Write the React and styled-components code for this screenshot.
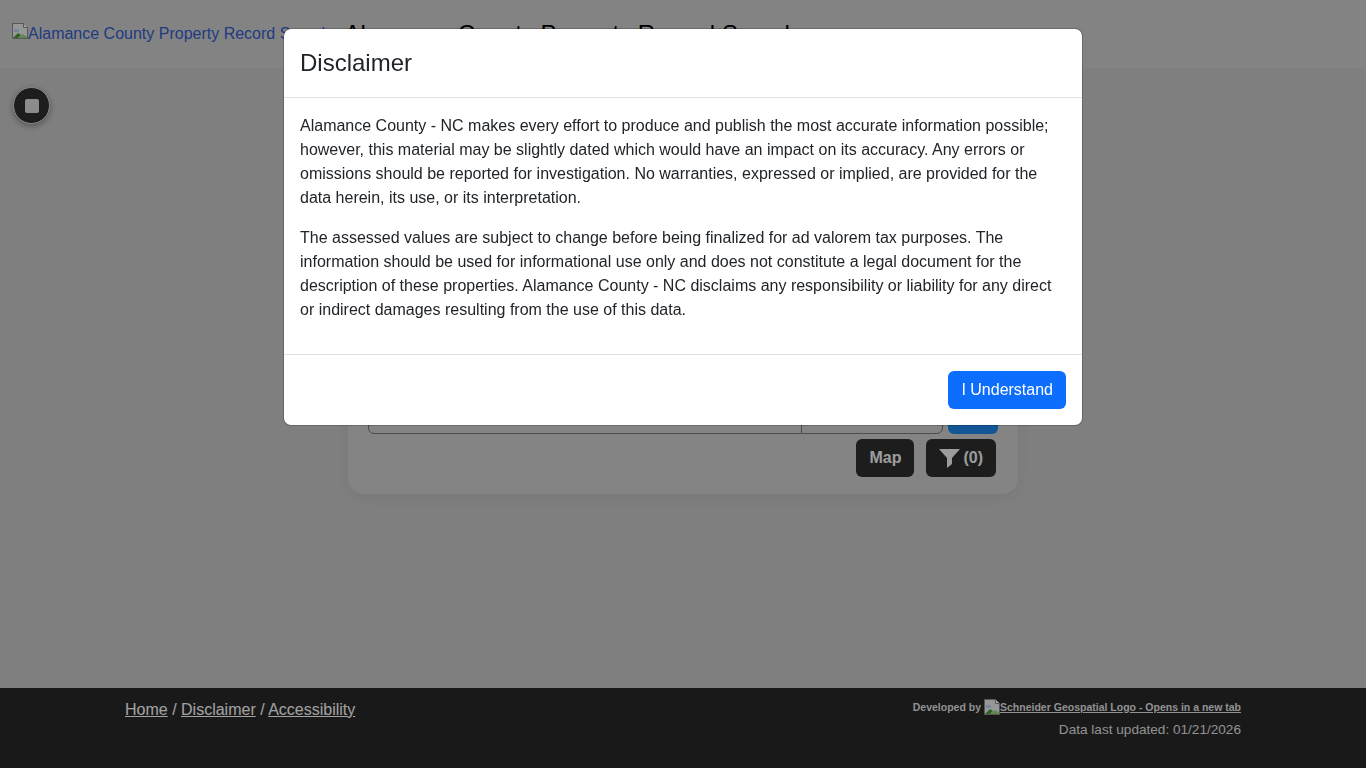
import React from 'react';
import styled, { createGlobalStyle } from 'styled-components';

const GlobalStyle = createGlobalStyle`
  html, body {
    margin: 0;
    padding: 0;
    height: 100%;
    background: #b7b7b7;
    font-family: "Liberation Sans", Arial, sans-serif;
    font-size: 16px;
    line-height: 24px;
    color: #212529;
    overflow: hidden;
  }
  * {
    box-sizing: border-box;
  }
`;

const Page = styled.div`
  position: relative;
  display: flex;
  flex-direction: column;
  height: 768px;
`;

const Header = styled.header`
  display: flex;
  align-items: center;
  height: 68px;
  padding: 0 12px 1px;
  background: #bcbcbc;
`;

const LogoLink = styled.a`
  display: flex;
  align-items: baseline;
  color: #2f55b8;
  text-decoration: none;
  white-space: nowrap;
`;

const Title = styled.h1`
  margin: 0 0 0 14px;
  font-size: 24px;
  font-weight: 400;
  color: #000;
  white-space: nowrap;
`;

const Main = styled.main`
  flex: 1;
  display: flex;
  justify-content: center;
  align-items: flex-start;
  padding-top: 130px;
`;

const RoundButton = styled.button`
  position: absolute;
  left: 13px;
  top: 87px;
  display: flex;
  align-items: center;
  justify-content: center;
  width: 37px;
  height: 37px;
  padding: 0;
  border: 1px solid #c8c8c8;
  border-radius: 50%;
  background: #2a2a2a;
  box-shadow: 0 2px 6px rgba(0, 0, 0, 0.35);
`;

const StopMark = styled.span`
  display: block;
  width: 14px;
  height: 14px;
  border-radius: 2px;
  background: #c8c8c8;
`;

const SearchCard = styled.section`
  width: 670px;
  padding: 198px 20px 17px;
  border-radius: 16px;
  background: #bdbdbd;
  box-shadow: 0 4px 16px rgba(0, 0, 0, 0.06);
`;

const SearchRow = styled.div`
  display: flex;
  height: 38px;
`;

const SearchInput = styled.div`
  width: ${(p) => p.$width}px;
  border: 1px solid #6f6f6f;
  border-radius: ${(p) => p.$radius};
  margin-left: ${(p) => (p.$joined ? '-1px' : '0')};
  background: #bdbdbd;
`;

const SearchButton = styled.button`
  width: 50px;
  margin-left: 5px;
  border: 0;
  border-radius: 6px;
  background: #1a7bd6;
`;

const ActionRow = styled.div`
  display: flex;
  justify-content: flex-end;
  gap: 12px;
  margin-top: 5px;
  padding-right: 2px;
`;

const DarkButton = styled.button`
  display: flex;
  align-items: center;
  gap: 3px;
  height: 38px;
  padding: 0 13px;
  border: 0;
  border-radius: 6px;
  background: #2a2a2a;
  color: #e0e0e0;
  font: 700 16px/24px "Liberation Sans", Arial, sans-serif;
`;

const Footer = styled.footer`
  display: flex;
  justify-content: space-between;
  height: 80px;
  padding: 9px 125px 0;
  background: #252525;
  color: #e8e8e8;
`;

const FooterLinks = styled.div`
  padding-top: 1px;
`;

const FooterLink = styled.a`
  color: inherit;
  text-decoration: underline;
`;

const FooterRight = styled.div`
  display: flex;
  flex-direction: column;
  align-items: flex-end;
  font-size: 13.6px;
  line-height: 21px;
  color: #d0d0d0;
`;

const DevelopedBy = styled.div`
  display: flex;
  align-items: center;
  height: 20px;
  margin-bottom: 2px;
  font-size: 10.5px;
  font-weight: 700;
  white-space: nowrap;
`;

const VendorLink = styled(FooterLink)`
  display: flex;
  align-items: center;
  margin-left: 3px;
`;

const Backdrop = styled.div`
  position: fixed;
  inset: 0;
  display: flex;
  justify-content: center;
  align-items: flex-start;
  padding-top: 28px;
  background: rgba(0, 0, 0, 0.3);
`;

const Modal = styled.div`
  width: 800px;
  border: 1px solid rgba(0, 0, 0, 0.2);
  border-radius: 8px;
  background: #fff;
  background-clip: padding-box;
  overflow: hidden;
`;

const ModalHeader = styled.div`
  padding: 16px;
  border-bottom: 1px solid #dee2e6;
`;

const ModalTitle = styled.h2`
  margin: 0;
  font-size: 24px;
  line-height: 36px;
  font-weight: 400;
`;

const ModalBody = styled.div`
  padding: 16px;

  p {
    margin: 0 0 16px;
  }
`;

const ModalFooter = styled.div`
  display: flex;
  justify-content: flex-end;
  padding: 16px;
  border-top: 1px solid #dee2e6;
`;

const PrimaryButton = styled.button`
  height: 38px;
  padding: 0 13px;
  border: 0;
  border-radius: 6px;
  background: #0d6efd;
  color: #fff;
  font: 400 16px/24px "Liberation Sans", Arial, sans-serif;
`;

const BrokenImage = () => (
  <svg width="16" height="16" viewBox="0 0 16 16" style={{ flexShrink: 0 }}>
    <path d="M0.5 0.5h11l4 4v11h-15z" fill="#d9d9d9" stroke="#7d7d7d" />
    <path d="M11.5 0.5v4h4" fill="#f4f4f4" stroke="#7d7d7d" />
    <path d="M2 6h5v3h-5z" fill="#a9c3e4" />
    <path d="M1 15l5-5 3 2 -3 3z" fill="#3f8f35" />
    <path d="M6 15l5-4 4 3v1z" fill="#8cc06c" />
  </svg>
);

const FunnelIcon = () => (
  <svg width="21" height="20" viewBox="0 0 21 20" fill="currentColor">
    <path d="M0 1h21l-8 9v6l-5 4v-10z" />
  </svg>
);

export default function App() {
  return (
    <>
      <GlobalStyle />
      <Page>
        <Header>
          <LogoLink href="#">
            <BrokenImage />
            Alamance County Property Record Search
          </LogoLink>
          <Title>Alamance County Property Record Search</Title>
        </Header>
        <RoundButton aria-label="Stop">
          <StopMark />
        </RoundButton>
        <Main>
          <SearchCard>
            <SearchRow>
              <SearchInput $width={434} $radius="6px 0 0 6px" />
              <SearchInput $width={142} $radius="0 6px 6px 0" $joined />
              <SearchButton aria-label="Search" />
            </SearchRow>
            <ActionRow>
              <DarkButton>Map</DarkButton>
              <DarkButton>
                <FunnelIcon />
                (0)
              </DarkButton>
            </ActionRow>
          </SearchCard>
        </Main>
        <Footer>
          <FooterLinks>
            <FooterLink href="#">Home</FooterLink> / <FooterLink href="#">Disclaimer</FooterLink> /{' '}
            <FooterLink href="#">Accessibility</FooterLink>
          </FooterLinks>
          <FooterRight>
            <DevelopedBy>
              Developed by
              <VendorLink href="#">
                <BrokenImage />
                Schneider Geospatial Logo - Opens in a new tab
              </VendorLink>
            </DevelopedBy>
            <div>Data last updated: 01/21/2026</div>
          </FooterRight>
        </Footer>
      </Page>
      <Backdrop>
        <Modal>
          <ModalHeader>
            <ModalTitle>Disclaimer</ModalTitle>
          </ModalHeader>
          <ModalBody>
            <p>
              Alamance County - NC makes every effort to produce and publish the most accurate
              information possible; however, this material may be slightly dated which would have
              an impact on its accuracy. Any errors or omissions should be reported for
              investigation. No warranties, expressed or implied, are provided for the data herein,
              its use, or its interpretation.
            </p>
            <p>
              The assessed values are subject to change before being finalized for ad valorem tax
              purposes. The information should be used for informational use only and does not
              constitute a legal document for the description of these properties. Alamance County
              - NC disclaims any responsibility or liability for any direct or indirect damages
              resulting from the use of this data.
            </p>
          </ModalBody>
          <ModalFooter>
            <PrimaryButton>I Understand</PrimaryButton>
          </ModalFooter>
        </Modal>
      </Backdrop>
    </>
  );
}
